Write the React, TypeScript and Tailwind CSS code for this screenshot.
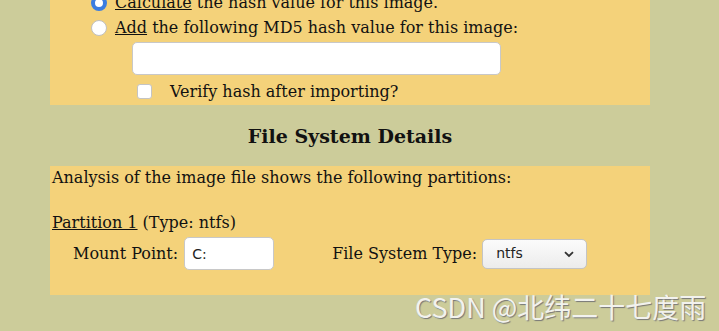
import React from 'react';

const App: React.FC = () => {
  return (
    <div className="relative h-[331px] overflow-hidden bg-[#cccc9a] font-['DejaVu_Serif',serif] text-[16px] text-[#111]">
      {/* hash options panel */}
      <div className="-mt-[10px] ml-[50px] w-[600px] bg-[#f4d27a] pb-[1px]">
        <label className="flex h-[25px] items-center pl-[41px]">
          <input
            type="radio"
            name="hash"
            defaultChecked
            className="m-0 h-4 w-4 appearance-none rounded-full border border-[#c0c0c0] bg-white checked:border-[4px] checked:border-[#3b7de0]"
          />
          <span className="ml-[8px]">
            <span className="underline">Calculate</span> the hash value for this image.
          </span>
        </label>
        <label className="flex h-[25px] items-center pl-[41px]">
          <input
            type="radio"
            name="hash"
            className="m-0 h-4 w-4 appearance-none rounded-full border border-[#c0c0c0] bg-white checked:border-[4px] checked:border-[#3b7de0]"
          />
          <span className="ml-[8px]">
            <span className="underline">Add</span> the following MD5 hash value for this image:
          </span>
        </label>
        <input
          type="text"
          className="ml-[82px] mt-[2px] block h-[33px] w-[369px] rounded-[5px] border border-[#c8c8c8] bg-white px-2"
        />
        <label className="mt-[4px] flex h-[25px] items-center pl-[87px]">
          <input
            type="checkbox"
            className="m-0 h-[15px] w-[15px] appearance-none rounded-[3px] border border-[#c4c4c4] bg-white checked:bg-[#3b7de0]"
          />
          <span className="ml-[18px]">Verify hash after importing?</span>
        </label>
      </div>

      <div className="ml-[50px] flex h-[61px] w-[600px] items-center justify-center pt-[1px]">
        <h2 className="text-[19px] font-bold">File System Details</h2>
      </div>

      {/* partitions panel */}
      <div className="ml-[50px] h-[129px] w-[600px] bg-[#f4d27a] pl-[2px]">
        <p className="leading-[24px]">Analysis of the image file shows the following partitions:</p>
        <p className="mt-[21px] leading-[24px]">
          <span className="underline">Partition 1</span> (Type: ntfs)
        </p>
        <div className="mt-[1px] flex h-[35px] items-center pl-[21px]">
          <span>Mount Point:</span>
          <input
            type="text"
            defaultValue="C:"
            className="ml-[6px] h-[33px] w-[90px] rounded-[5px] border border-[#c8c8c8] bg-white px-[7px] font-['DejaVu_Sans',sans-serif] text-[14px] text-[#222]"
          />
          <span className="ml-[58px]">File System Type:</span>
          <div className="relative ml-[5px]">
            <select
              defaultValue="ntfs"
              className="h-[30px] w-[105px] appearance-none rounded-[5px] border border-[#c4c4c4] bg-gradient-to-b from-[#fbfbfb] to-[#ececec] pl-[13px] font-['DejaVu_Sans',sans-serif] text-[14px] text-[#222]"
            >
              <option value="ntfs">ntfs</option>
              <option value="fat32">fat32</option>
              <option value="ext4">ext4</option>
            </select>
            <svg
              className="pointer-events-none absolute right-[13px] top-[12px]"
              width="10"
              height="7"
              viewBox="0 0 10 7"
              fill="none"
            >
              <path d="M1 1.2 L5 5 L9 1.2" stroke="#333" strokeWidth="1.8" />
            </svg>
          </div>
        </div>
      </div>

      <div className="absolute left-[415px] top-[292px] font-['Noto_Sans_CJK_SC','DejaVu_Sans',sans-serif] text-[27px] leading-[30px] text-[#f2f2ee] [text-shadow:1px_1px_1px_#777]">
        CSDN @北纬二十七度雨
      </div>
    </div>
  );
};

export default App;
